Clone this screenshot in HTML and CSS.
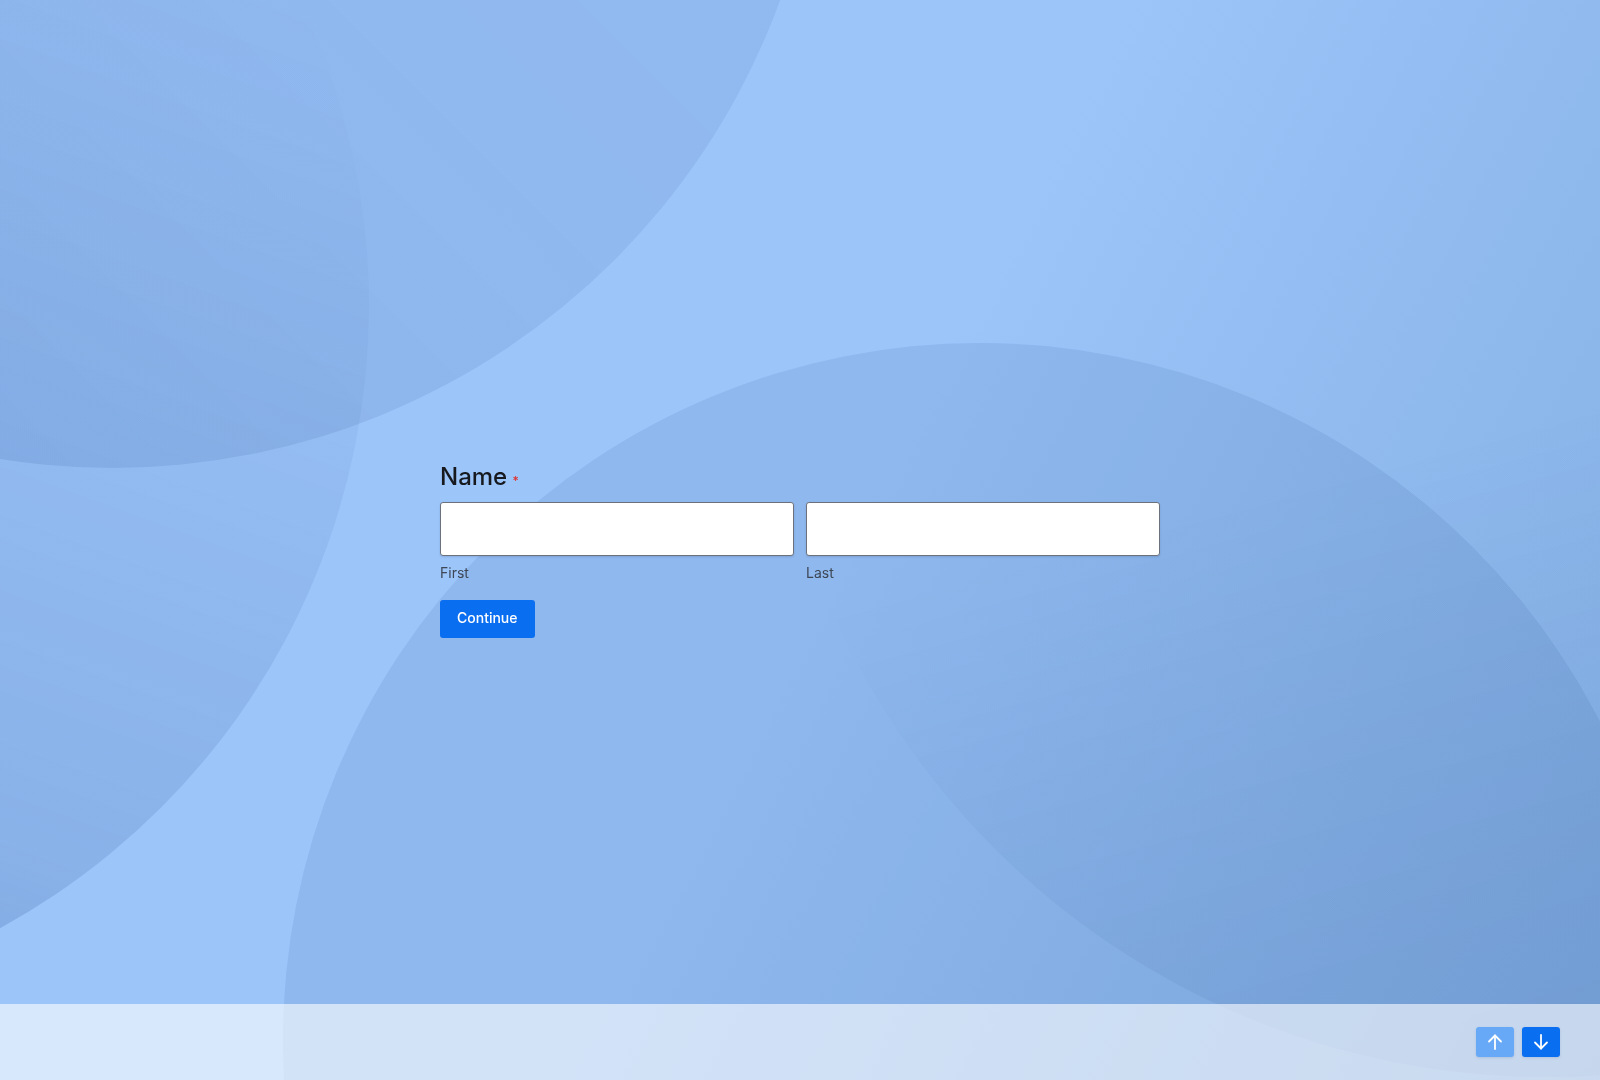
FILE: index.html
```html
<!DOCTYPE html>
<html lang="en">
<head>
<meta charset="utf-8">
<title>Form</title>
<link rel="stylesheet" href="styles.css">
</head>
<body>
<div class="bg" aria-hidden="true">
  <div class="blob blob-a"></div>
  <div class="blob blob-b"></div>
  <div class="blob blob-c"></div>
  <div class="blob blob-d"></div>
</div>
<div class="page">
  <main class="stage">
    <form class="card">
      <h1 class="question">Name <span class="req">*</span></h1>
      <div class="fields">
        <label class="field">
          <input class="input" type="text">
          <span class="sublabel">First</span>
        </label>
        <label class="field">
          <input class="input" type="text">
          <span class="sublabel">Last</span>
        </label>
      </div>
      <button type="button" class="btn-continue">Continue</button>
    </form>
  </main>
  <footer class="footer">
    <button type="button" class="nav-btn nav-up" aria-label="Previous">
      <svg viewBox="0 0 16 16" width="16" height="16" fill="none" stroke="#fff" stroke-width="1.8" stroke-linecap="round" stroke-linejoin="round"><path d="M8 15V1.5"/><path d="M2 7.5L8 1.5L14 7.5"/></svg>
    </button>
    <button type="button" class="nav-btn nav-down" aria-label="Next">
      <svg viewBox="0 0 16 16" width="16" height="16" fill="none" stroke="#fff" stroke-width="1.8" stroke-linecap="round" stroke-linejoin="round"><path d="M8 1V14.5"/><path d="M2 8.5L8 14.5L14 8.5"/></svg>
    </button>
  </footer>
</div>
</body>
</html>
```

FILE: styles.css
```css
* { box-sizing: border-box; }

html, body {
  margin: 0;
  height: 100%;
}

body {
  font-family: Inter, "Noto Sans", "Liberation Sans", sans-serif;
  background: linear-gradient(118deg, #9cc5fa 0%, #9cc5fa 52%, #8db8ec 80%, #84afe3 100%);
  overflow: hidden;
}

.bg {
  position: fixed;
  inset: 0;
  z-index: 0;
  overflow: hidden;
}

.blob {
  position: absolute;
  border-radius: 50%;
}

/* top-left large circle */
.blob-a {
  left: -599px;
  top: -954px;
  width: 1422px;
  height: 1422px;
  background: linear-gradient(225deg, rgba(20, 60, 130, 0.08) 40%, rgba(20, 60, 130, 0.11) 75%, rgba(20, 60, 130, 0.15) 100%);
}

/* left circle */
.blob-b {
  left: -1049px;
  top: -403px;
  width: 1418px;
  height: 1418px;
  background: linear-gradient(200deg, rgba(20, 60, 130, 0) 22%, rgba(20, 60, 130, 0.015) 30%, rgba(20, 60, 130, 0.06) 45%, rgba(20, 60, 130, 0.09) 55%, rgba(20, 60, 130, 0.14) 72%, rgba(20, 60, 130, 0.28) 90%, rgba(20, 60, 130, 0.32) 100%);
}

/* bottom centre circle */
.blob-c {
  left: 283px;
  top: 343px;
  width: 1394px;
  height: 1394px;
  background: rgba(20, 60, 130, 0.095);
}

/* bottom right circle */
.blob-d {
  left: 766px;
  top: -483px;
  width: 1560px;
  height: 1560px;
  background: linear-gradient(165deg, rgba(20, 60, 130, 0) 56%, rgba(20, 60, 130, 0.035) 67%, rgba(20, 60, 130, 0.07) 80%, rgba(20, 60, 130, 0.09) 100%);
}

.page {
  position: relative;
  z-index: 1;
  display: flex;
  flex-direction: column;
  height: 100vh;
}

.stage {
  flex: 1;
  padding-top: 462px;
}

.card {
  width: 720px;
  margin: 0 auto;
}

.question {
  margin: 0;
  font-size: 24px;
  line-height: 29px;
  font-weight: 500;
  color: #16191e;
}

.req {
  font-size: 12px;
  line-height: 1;
  color: #e0322d;
  margin-left: -1px;
}

.fields {
  margin-top: 11px;
  display: grid;
  grid-template-columns: 1fr 1fr;
  column-gap: 12px;
}

.field {
  display: flex;
  flex-direction: column;
}

.input {
  height: 54px;
  width: 100%;
  border: 1px solid #6c727b;
  border-radius: 3px;
  background: #fff;
  box-shadow: 0 1px 2px rgba(30, 50, 90, 0.15);
  font: inherit;
  padding: 0 12px;
}

.sublabel {
  margin-top: 7px;
  font-size: 14px;
  line-height: 20px;
  color: #3d4756;
}

.btn-continue {
  margin-top: 17px;
  height: 38px;
  padding: 0 17px 3px;
  display: inline-flex;
  align-items: center;
  border: 0;
  border-radius: 3px;
  background: #0a6ef1;
  color: #fff;
  font-family: inherit;
  font-size: 14px;
  font-weight: 500;
  cursor: pointer;
}

.footer {
  height: 76px;
  flex: none;
  background: rgba(255, 255, 255, 0.6);
  display: flex;
  justify-content: flex-end;
  align-items: center;
  gap: 8px;
  padding: 0 40px 0 0;
}

.nav-btn {
  width: 38px;
  height: 30px;
  border: 0;
  border-radius: 3px;
  display: flex;
  align-items: center;
  justify-content: center;
  padding: 0;
  box-shadow: 0 1px 3px rgba(30, 60, 120, 0.15);
}

.nav-up { background: #67a9f6; }
.nav-down { background: #0a6ef1; }
```
